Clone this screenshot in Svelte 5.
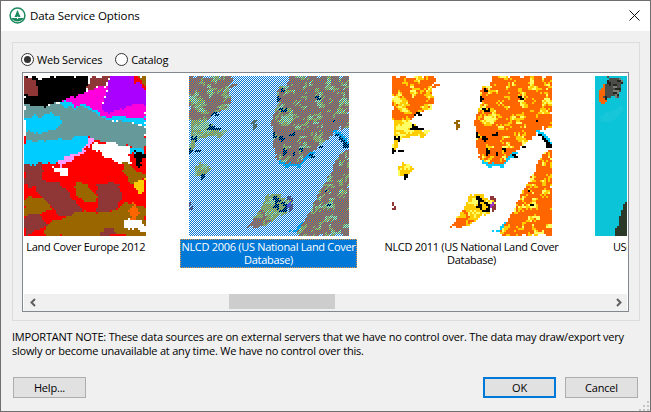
<script lang="ts">
	// pixel-map thumbnails: polygons are rasterised onto a 2px grid so edges stay blocky
	type Layer = { c: string; pts: number[]; alt?: string; alt2?: string };

	function hash(x: number, y: number, s: number) {
		const v = Math.sin(x * 127.1 + y * 311.7 + s * 74.7) * 43758.5453;
		return v - Math.floor(v);
	}

	function noise(x: number, y: number, s: number) {
		const xi = Math.floor(x);
		const yi = Math.floor(y);
		const fx = x - xi;
		const fy = y - yi;
		const a = hash(xi, yi, s);
		const b = hash(xi + 1, yi, s);
		const c = hash(xi, yi + 1, s);
		const d = hash(xi + 1, yi + 1, s);
		return a * (1 - fx) * (1 - fy) + b * fx * (1 - fy) + c * (1 - fx) * fy + d * fx * fy;
	}

	function inside(px: number, py: number, pts: number[]) {
		let hit = false;
		for (let i = 0, j = pts.length - 2; i < pts.length; j = i, i += 2) {
			const yi = pts[i + 1];
			const yj = pts[j + 1];
			if (yi > py !== yj > py && px < ((pts[j] - pts[i]) * (py - yi)) / (yj - yi) + pts[i]) hit = !hit;
		}
		return hit;
	}

	function speck(x: number, y: number, w = 3, h = 3) {
		return [x, y, x + w, y, x + w, y + h, x, y + h];
	}

	function raster(layers: Layer[], cell: number, wobble: number, offset = 0, width = 160) {
		const runs: Record<string, string> = {};
		for (let y = 0; y < 160; y += cell) {
			for (let x = 0; x < width; x += cell) {
				const sx = x + 1 + (noise(x / 5, y / 5, 1) - 0.5) * wobble + (hash(x, y, 1) - 0.5);
				const sy = y + 1 + (noise(x / 5, y / 5, 2) - 0.5) * wobble + (hash(x, y, 2) - 0.5);
				const layer = layers.find((l) => inside(sx, sy, l.pts));
				if (!layer) continue;
				let c = layer.c;
				const n = noise(x / 5, y / 5, 3) * 0.7 + hash(x, y, 4) * 0.3;
				if (layer.alt && n > 0.6) c = layer.alt;
				if (layer.alt2 && n > 0.72) c = layer.alt2;
				runs[c] = (runs[c] ?? "") + `M${x + offset} ${y}h${cell}v${cell}h-${cell}z`;
			}
		}
		return Object.entries(runs).map(([fill, d]) => ({ fill, d }));
	}

	const O = "#ff6600";
	const Y = "#ffcc00";
	const L = "#ffff66";
	const K = "#000000";
	const CY = "#00ccff";

	const blackSpecks = [
		[91, 14, 4, 3], [88, 20, 3, 6], [91, 33, 7, 2], [85, 56, 3, 5], [91, 62, 3, 5], [99, 57, 6, 3],
		[93, 72, 3, 7], [103, 77, 4, 2], [110, 72, 3, 4], [127, 21, 3, 3], [137, 41, 2, 4], [145, 44, 2, 3],
		[120, 79, 3, 3], [131, 69, 4, 2], [135, 114, 4, 2], [138, 129, 4, 2], [18, 49, 13, 4], [23, 39, 7, 2],
		[0, 63, 9, 3], [0, 70, 4, 7], [6, 72, 3, 3], [10, 99, 6, 4],
		[85, 122, 7, 3], [85, 125, 3, 8], [90, 133, 6, 3], [93, 125, 3, 8]
	];

	const nlcd: Layer[] = [
		...blackSpecks.map(([x, y, w, h]) => ({ c: K, pts: speck(x, y, w, h) })),
		{ c: "#9933cc", pts: speck(97, 127, 3, 5) },
		{ c: "#996600", pts: speck(64, 44, 3, 10) },
		{ c: K, pts: [145, 57, 147, 56, 160, 69, 160, 72] },
		{ c: CY, pts: [145, 54, 149, 54, 160, 66, 160, 69] },
		{ c: O, alt: Y, alt2: L, pts: [0, 0, 45, 0, 41, 7, 49, 9, 41, 14, 41, 34, 28, 39, 18, 44, 6, 44, 0, 41] },
		{ c: Y, alt: L, pts: [0, 41, 18, 44, 36, 57, 28, 62, 11, 62, 0, 81] },
		{ c: O, alt: Y, alt2: L, pts: [98, 0, 160, 0, 160, 51, 145, 56, 138, 65, 125, 74, 111, 87, 98, 89, 88, 81, 85, 67, 83, 51, 88, 27, 88, 14, 101, 7] },
		{ c: CY, pts: [88, 81, 96, 92, 110, 90, 126, 77, 120, 74, 98, 89] },
		{ c: O, alt: Y, alt2: L, pts: [160, 72, 148, 81, 141, 101, 131, 111, 125, 127, 115, 144, 106, 157, 111, 160, 160, 160] },
		{ c: CY, pts: [112, 145, 108, 150, 102, 156, 106, 157, 115, 146] },
		{ c: O, alt: Y, pts: [58, 153, 75, 151, 82, 146, 72, 132] },
		{ c: Y, alt: L, pts: [78, 119, 91, 119, 103, 127, 95, 137, 75, 151, 58, 153] },
		{ c: "#8f3636", pts: [96, 119, 104, 124, 104, 134, 99, 136] },
		{ c: Y, alt: L, pts: [10, 86, 23, 92, 15, 101, 5, 99] },
		{ c: "#8f3636", pts: speck(0, 128, 3, 6) }
	];

	const corine: Layer[] = [
		{ c: "#ffffff", pts: [99, 142, 118, 144, 122, 157, 114, 151, 103, 152] },
		{ c: O, pts: [109, 126, 114, 137, 106, 146, 105, 139] },
		{ c: "#8f3636", pts: [76, 154, 91, 153, 91, 160, 76, 160] },
		{ c: Y, pts: [111, 106, 122, 104, 122, 114, 114, 119] },
		{ c: K, pts: [109, 74, 121, 79, 116, 93, 111, 87] },
		{ c: "#ffffff", pts: [69, 66, 86, 65, 106, 72, 106, 87, 96, 87, 83, 81, 69, 72] },
		{ c: "#ff99ff", pts: [66, 62, 71, 64, 59, 77, 36, 89, 34, 86, 58, 74] },
		{ c: "#ffffff", pts: [26, 89, 44, 92, 44, 101, 36, 101] },
		{ c: "#996600", pts: [96, 84, 106, 89, 122, 101, 113, 109, 101, 101] },
		{ c: "#996600", pts: [73, 137, 86, 137, 99, 127, 122, 131, 122, 160, 66, 160] },
		{ c: "#8f3636", pts: [73, 109, 96, 107, 96, 125, 86, 137, 73, 137] },
		{ c: "#996600", pts: [53, 106, 63, 107, 73, 121, 63, 127, 53, 121] },
		{ c: "#8f3636", pts: [0, 139, 16, 139, 23, 147, 9, 157, 0, 160] },
		{ c: "#996600", pts: [23, 147, 36, 144, 46, 141, 58, 134, 73, 137, 73, 151, 66, 160, 21, 160] },
		{ c: "#996600", pts: [0, 121, 19, 121, 28, 132, 16, 139, 0, 139] },
		{ c: "#8f3636", pts: [0, 89, 18, 87, 19, 104, 33, 106, 44, 117, 58, 134, 46, 141, 36, 141, 29, 131, 19, 121, 13, 114, 0, 107] },
		{ c: "#8f3636", pts: [0, 3, 8, 3, 14, 14, 12, 20, 6, 19, 0, 15] },
		{ c: "#ffffff", pts: [12, 0, 24, 0, 24, 2, 12, 2] },
		{ c: K, pts: [0, 0, 64, 0, 62, 14, 50, 20, 40, 25, 30, 28, 10, 30, 0, 28] },
		{ c: "#996600", pts: [114, 0, 122, 0, 122, 11, 118, 9] },
		{ c: "#ff0000", pts: [107, 0, 114, 0, 122, 12, 122, 16, 114, 9] },
		{ c: "#8f3636", pts: [68, 0, 86, 0, 82, 9, 66, 14, 62, 11] },
		{ c: "#aa00ff", pts: [86, 0, 107, 0, 114, 9, 122, 14, 122, 27, 103, 31, 86, 37, 76, 32, 83, 14] },
		{ c: "#ff00dd", pts: [46, 17, 83, 11, 76, 32, 86, 37, 103, 31, 122, 27, 122, 44, 113, 41, 86, 41, 63, 31, 36, 26] },
		{ c: CY, pts: [34, 26, 46, 22, 63, 29, 86, 41, 113, 42, 122, 42, 122, 51, 109, 47, 86, 43, 59, 32, 39, 31] },
		{ c: CY, pts: [0, 41, 29, 39, 41, 47, 29, 54, 9, 57, 0, 54] },
		{ c: CY, pts: [0, 66, 66, 61, 58, 77, 34, 87, 0, 89] },
		{ c: CY, pts: [100, 70, 122, 74, 122, 82, 108, 76] },
		{ c: "#669999", pts: [0, 29, 34, 29, 59, 32, 86, 43, 122, 51, 122, 74, 99, 69, 69, 62, 0, 66] },
		{ c: "#ff0000", pts: [-9, 60, 130, 60, 130, 170, -9, 170] }
	];

	const coast: Layer[] = [
		{ c: "#4a4d48", alt: "#23261f", alt2: "#7b7d76", pts: [13, 0, 26, 2, 27, 12, 24, 16, 22, 22, 18, 18, 13, 22, 10, 24, 10, 12] },
		{ c: O, pts: [4, 18, 9, 8, 14, 14, 12, 26, 7, 28, 3, 26] },
		{ c: "#2b3a28", pts: [32, 121, 34, 160, 34, 170, 15, 170] },
		{ c: "#18c6da", pts: [5, 40, 28, 30, 28, 38, 8, 48] },
		{ c: "#0cc4d8", pts: [-9, -9, 40, -9, 40, 170, -9, 170] }
	];

	const items = [
		{ label: "CORINE Land Cover Europe 2012", paths: raster(corine, 2, 5, 38, 122) },
		{ label: "NLCD 2006 (US National Land Cover\nDatabase)", paths: raster(nlcd, 2, 5), selected: true },
		{ label: "NLCD 2011 (US National Land Cover\nDatabase)", paths: raster(nlcd, 2, 5) },
		{ label: "USGS Land Cover CONUS", paths: raster(coast, 2, 3, 0, 32) }
	];

	const note =
		"IMPORTANT NOTE: These data sources are on external servers that we have no control over. The data may draw/export very slowly or become unavailable at any time. We have no control over this.";
</script>

<div class="dialog">
	<header class="titlebar">
		<svg class="logo" width="17" height="17" viewBox="0 0 17 17">
			<circle cx="8.5" cy="8.5" r="7.4" fill="#fff" stroke="#1c8a5e" stroke-width="1.5" />
			<path d="M8.5 3 L11.5 10 H5.5 Z" fill="#1c8a5e" />
			<path d="M2.2 11 H14.8 A7.4 7.4 0 0 1 2.2 11 Z" fill="#1c8a5e" />
			<path d="M8 9.5h1v2.5h-1z" fill="#fff" />
		</svg>
		<span class="title">Data Service Options</span>
		<svg class="close" width="11" height="11" viewBox="0 0 11 11">
			<path d="M0.5 0.5 L10.5 10.5 M10.5 0.5 L0.5 10.5" stroke="#111" stroke-width="1" fill="none" />
		</svg>
	</header>

	<main class="body">
		<section class="group">
			<div class="radios">
				<label class="radio"><span class="dot on"></span>Web Services</label>
				<label class="radio"><span class="dot"></span>Catalog</label>
			</div>

			<div class="listbox">
				<div class="viewport">
					<div class="row">
						{#each items as item}
							<div class="item">
								<svg class="thumb" width="160" height="160" viewBox="0 0 160 160" shape-rendering="crispEdges">
									<defs>
										<pattern id="dither" width="2" height="2" patternUnits="userSpaceOnUse">
											<rect width="1" height="1" fill="#0078d7" />
											<rect x="1" y="1" width="1" height="1" fill="#0078d7" />
										</pattern>
									</defs>
									{#each item.paths as p}
										<path d={p.d} fill={p.fill} />
									{/each}
									{#if item.selected}
										<rect width="160" height="160" fill="url(#dither)" />
									{/if}
								</svg>
								<div class="caption" class:selected={item.selected}>{item.label}</div>
							</div>
						{/each}
					</div>
				</div>
				<div class="scrollbar">
					<span class="arrow">
						<svg width="8" height="9" viewBox="0 0 8 9"><path d="M6 1 L2.5 4.5 L6 8" fill="none" stroke="#606060" stroke-width="2" /></svg>
					</span>
					<div class="track"><div class="handle"></div></div>
					<span class="arrow">
						<svg width="8" height="9" viewBox="0 0 8 9"><path d="M2 1 L5.5 4.5 L2 8" fill="none" stroke="#606060" stroke-width="2" /></svg>
					</span>
				</div>
			</div>
		</section>

		<p class="note">{note}</p>

		<footer class="actions">
			<button class="btn">Help...</button>
			<span class="spacer"></span>
			<button class="btn primary">OK</button>
			<button class="btn">Cancel</button>
		</footer>

		<svg class="grip" width="11" height="11" viewBox="0 0 11 11">
			<path d="M8 1h2v2h-2zM4 5h2v2h-2zM8 5h2v2h-2zM0 9h2v2h-2zM4 9h2v2h-2zM8 9h2v2h-2z" fill="#c4c4c4" />
		</svg>
	</main>
</div>

<style>
	:global(body) {
		margin: 0;
		background: #f0f0f0;
	}

	.dialog {
		width: 651px;
		height: 412px;
		box-sizing: border-box;
		border: 1px solid #6e6e6e;
		display: flex;
		flex-direction: column;
		font-family: "Open Sans", "Noto Sans", sans-serif;
		font-size: 11px;
		letter-spacing: -0.2px;
		color: #000;
		background: #f0f0f0;
		overflow: hidden;
	}

	.titlebar {
		height: 30px;
		flex: none;
		background: #fff;
		display: flex;
		align-items: center;
		padding: 0 10px 1px 8px;
		box-sizing: border-box;
	}

	.logo {
		margin-right: 4px;
	}

	.title {
		flex: 1;
		font-size: 11.5px;
		letter-spacing: -0.1px;
	}

	.body {
		position: relative;
		flex: 1;
		padding: 11px 11px 0;
	}

	.group {
		width: 628px;
		height: 279px;
		box-sizing: border-box;
		border: 1px solid #dcdcdc;
		padding: 9px 9px 0;
	}

	.radios {
		display: flex;
		gap: 13px;
		height: 20px;
		margin-left: -1px;
	}

	.radio {
		display: flex;
		align-items: center;
		height: 14px;
	}

	.dot {
		width: 13px;
		height: 13px;
		box-sizing: border-box;
		border: 1px solid #333;
		border-radius: 50%;
		background: #fff;
		margin-right: 3px;
		display: grid;
		place-items: center;
	}

	.dot.on::after {
		content: "";
		width: 7px;
		height: 7px;
		border-radius: 50%;
		background: #333;
	}

	.listbox {
		width: 607px;
		height: 240px;
		box-sizing: border-box;
		border: 1px solid #828790;
		background: #fff;
		padding: 1px 1px 0;
		display: flex;
		flex-direction: column;
	}

	.viewport {
		flex: 1;
		overflow: hidden;
		padding-top: 2px;
	}

	.row {
		display: flex;
		margin-left: -60px;
	}

	.item {
		flex: none;
		width: 203px;
	}

	.thumb {
		display: block;
		margin-left: 22px;
	}

	.caption {
		width: 177px;
		box-sizing: border-box;
		margin: 3px 0 0 13px;
		padding: 0 0 1px;
		border: 1px solid transparent;
		line-height: 13px;
		text-align: center;
		letter-spacing: -0.3px;
		white-space: pre-line;
	}

	.caption.selected {
		background: #0078d7;
		color: #fff;
		border: 1px dotted #e89a3c;
	}

	.scrollbar {
		flex: none;
		height: 17px;
		background: #f0f0f0;
		display: flex;
	}

	.arrow {
		width: 17px;
		height: 17px;
		display: grid;
		place-items: center;
	}

	.track {
		flex: 1;
	}

	.handle {
		width: 106px;
		height: 15px;
		margin-left: 188px;
		background: #cdcdcd;
	}

	.note {
		margin: 9px 0 0;
		width: 612px;
		line-height: 14px;
	}

	.actions {
		display: flex;
		gap: 9px;
		margin: 19px 1px 0 1px;
	}

	.spacer {
		flex: 1;
	}

	.btn {
		width: 73px;
		height: 21px;
		box-sizing: border-box;
		border: 1px solid #adadad;
		background: #e1e1e1;
		font: inherit;
		letter-spacing: inherit;
		color: #000;
		padding: 0;
	}

	.btn.primary {
		border: 2px solid #0078d7;
	}

	.grip {
		position: absolute;
		right: 0;
		bottom: 0;
	}
</style>
